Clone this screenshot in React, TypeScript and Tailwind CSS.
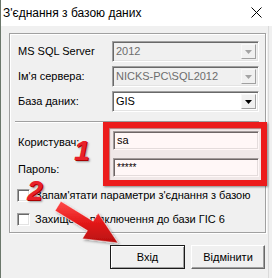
import { clsx } from 'clsx'

const SUNKEN =
  'border border-t-[#a0a0a0] border-l-[#a0a0a0] border-b-white border-r-white shadow-[inset_1px_1px_0_#696969,inset_-1px_-1px_0_#e3e3e3]'

function Combo({ value, disabled }: { value: string; disabled?: boolean }) {
  return (
    <div className={clsx('flex h-[21px] flex-1 items-stretch p-[2px]', SUNKEN, disabled ? 'bg-[#f0f0f0] text-[#6d6d6d]' : 'bg-white text-black')}>
      <span className="flex-1 pl-[1px] leading-[15px]">{value}</span>
      <span className="flex w-[15px] items-center justify-center border border-t-[#f8f8f8] border-l-[#f8f8f8] border-b-[#a0a0a0] border-r-[#a0a0a0] bg-[#f0f0f0]">
        <svg width="7" height="4" viewBox="0 0 7 4">
          <path d="M0 0h7L3.5 4z" fill={disabled ? '#a3a3a3' : '#000'} />
        </svg>
      </span>
    </div>
  )
}

function Field({ value, small }: { value: string; small?: boolean }) {
  return (
    <div className={clsx('flex h-[19px] flex-1 items-center bg-white pl-[3px]', SUNKEN, small && 'text-[10px]')}>{value}</div>
  )
}

function Check({ label }: { label: string }) {
  return (
    <div className="flex h-[13px] items-center gap-[5px]">
      <span className={clsx('h-[13px] w-[13px] shrink-0 bg-white', SUNKEN)} />
      <span className="whitespace-nowrap">{label}</span>
    </div>
  )
}

function Etched({ className }: { className?: string }) {
  return <div className={clsx('h-[2px] border-t border-t-[#a0a0a0] border-b border-b-white', className)} />
}

export default function App() {
  return (
    <div className="relative h-[278px] w-[272px] overflow-hidden border-l border-[#6b776b] bg-[#f0f0f0] font-['Liberation_Sans',Arial,sans-serif] text-[11px] text-black">
      {/* Title bar */}
      <div className="flex h-[26px] items-center justify-between bg-white pl-[2px] pr-[10px]">
        <span className="text-[12px]">З'єднання з базою даних</span>
        <svg width="11" height="11" viewBox="0 0 11 11" className="mb-[1px]">
          <path d="M0.5 0.5l10 10M10.5 0.5l-10 10" stroke="#000" strokeWidth="1" />
        </svg>
      </div>

      {/* Body */}
      <div className="mr-[3px] flex h-[252px] flex-col border-r border-r-[#dadada] pl-[8px] pr-[2px] pt-[7px]">
        {/* Group box */}
        <div className="flex flex-col border border-[#a0a0a0] pb-[6px] pl-[8px] pr-[6px] pt-[7px] shadow-[inset_1px_1px_0_white,1px_1px_0_white]">
          <div className="flex flex-col gap-[4px]">
            <div className="flex h-[21px] items-center">
              <span className="w-[94px]">MS SQL Server</span>
              <Combo value="2012" disabled />
            </div>
            <div className="flex h-[21px] items-center">
              <span className="w-[94px]">Ім'я сервера:</span>
              <Combo value={'NICKS-PC\\SQL2012'} disabled />
            </div>
            <div className="flex h-[21px] items-center">
              <span className="w-[94px]">База даних:</span>
              <Combo value="GIS" />
            </div>
          </div>

          <Etched className="-ml-[3px] mt-[9px]" />

          <div className="mt-[8px] flex flex-col gap-[8px]">
            <div className="flex h-[19px] items-center">
              <span className="w-[95px] pt-[3px]">Користувач:</span>
              <Field value="sa" />
            </div>
            <div className="flex h-[19px] items-center">
              <span className="w-[95px] pt-[4px]">Пароль:</span>
              <Field value="*****" small />
            </div>
          </div>

          <div className="-ml-[1px] mt-[12px] flex flex-col gap-[11px]">
            <Check label="Запам'ятати параметри з'єднання з базою" />
            <Check label="Захищене підключення до бази ГІС 6" />
          </div>
        </div>

        {/* Buttons */}
        <div className="mt-[12px] flex justify-end gap-[6px] pr-[1px]">
          <button className="h-[24px] w-[75px] border border-[#1a1a1a] bg-[#f0f0f0] shadow-[inset_1px_1px_0_white,inset_-1px_-1px_0_#a0a0a0]">
            Вхід
          </button>
          <button className="h-[24px] w-[74px] border border-t-white border-l-white border-b-[#696969] border-r-[#696969] bg-[#f0f0f0] shadow-[inset_-1px_-1px_0_#a0a0a0]">
            Відмінити
          </button>
        </div>
      </div>

      {/* Annotations */}
      <div className="pointer-events-none absolute left-[102px] top-[122px] h-[64px] w-[164px] border-[6px] border-[#ec1c1c] bg-[#ff0000]/[0.03] shadow-[1px_1px_2px_rgba(0,0,0,0.45),inset_1px_1px_1px_rgba(120,0,0,0.5)]" />

      <span className="pointer-events-none absolute left-[73px] top-[137px] text-[28px] font-bold italic leading-none text-[#e8202a] [text-shadow:1px_1px_0_#a00,2px_2px_2px_rgba(0,0,0,0.35)]">
        1
      </span>
      <span className="pointer-events-none absolute left-[26px] top-[177px] text-[28px] font-bold italic leading-none text-[#e8202a] [text-shadow:1px_1px_0_#a00,2px_2px_2px_rgba(0,0,0,0.35)]">
        2
      </span>

      <svg
        className="pointer-events-none absolute left-[49px] top-[195px]"
        width="75"
        height="55"
        viewBox="0 0 75 55"
      >
        <defs>
          <linearGradient id="arrowFill" x1="0" y1="0" x2="0" y2="1">
            <stop offset="0" stopColor="#ff4a4a" />
            <stop offset="0.5" stopColor="#e41a1a" />
            <stop offset="1" stopColor="#b80f0f" />
          </linearGradient>
          <filter id="arrowShadow" x="-20%" y="-20%" width="140%" height="140%">
            <feDropShadow dx="1.5" dy="1.5" stdDeviation="1.2" floodColor="#000" floodOpacity="0.35" />
          </filter>
        </defs>
        <polygon
          points="10.9,6.3 43.2,26.2 48.2,18.1 68,48 32.4,43.7 37.4,35.6 5.1,15.7"
          fill="url(#arrowFill)"
          stroke="#fff"
          strokeOpacity="0.6"
          strokeWidth="0.8"
          strokeLinejoin="round"
          filter="url(#arrowShadow)"
        />
      </svg>
    </div>
  )
}
